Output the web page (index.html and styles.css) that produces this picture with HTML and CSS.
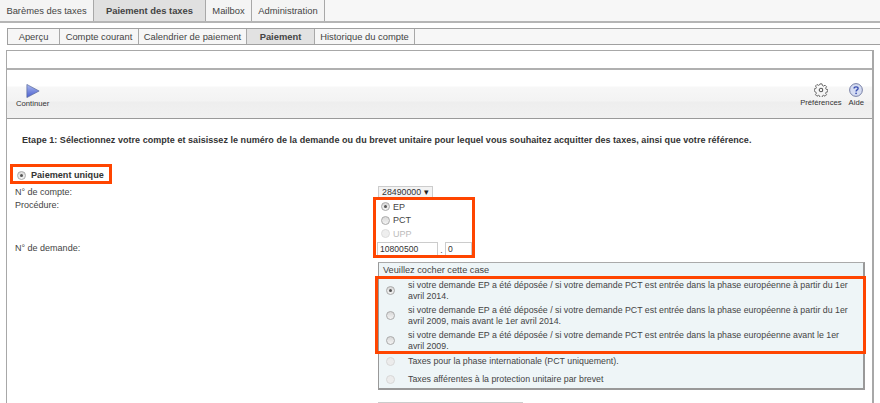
FILE: index.html
```html
<!DOCTYPE html>
<html lang="fr">
<head>
<meta charset="utf-8">
<title>Paiement</title>
<link rel="stylesheet" href="styles.css">
</head>
<body>
<nav class="tabs main-tabs">
  <a class="tab t1">Barèmes des taxes</a>
  <a class="tab t2 active">Paiement des taxes</a>
  <a class="tab t3">Mailbox</a>
  <a class="tab t4">Administration</a>
  <span class="tab-fill"></span>
</nav>
<nav class="tabs sub-tabs">
  <a class="tab s1">Aperçu</a>
  <a class="tab s2">Compte courant</a>
  <a class="tab s3">Calendrier de paiement</a>
  <a class="tab s4 active">Paiement</a>
  <a class="tab s5">Historique du compte</a>
  <span class="tab-fill"></span>
</nav>
<main class="panel">
  <div class="panel-top"></div>
  <div class="toolbar">
    <div class="tool tool-continue">
      <svg width="14" height="14" viewBox="0 0 16 16"><defs><linearGradient id="p" x1="0" y1="0" x2="0" y2="1"><stop offset="0" stop-color="#a9b8ee"/><stop offset="1" stop-color="#4a5fd0"/></linearGradient></defs><path d="M1 .5 15 8 1 15.500Z" fill="url(#p)" stroke="#5a6a9c" stroke-width=".8"/></svg>
      <span>Continuer</span>
    </div>
    <div class="tool-right">
      <div class="tool">
        <svg width="14" height="14" viewBox="0 0 16 16" fill="none" stroke="#555"><path d="M6.800 1h2.400l.4 1.900 1.300.6 1.700-1 1.700 1.700-1 1.700.6 1.300 1.900.4v2.400l-1.900.4-.6 1.300 1 1.700-1.700 1.700-1.700-1-1.300.6-.4 1.900H6.800l-.4-1.900-1.300-.6-1.700 1-1.700-1.700 1-1.700-.6-1.300L.2 9.200V6.800l1.900-.4.600-1.300-1-1.700 1.700-1.700 1.700 1 1.300-.6Z" stroke-width="1"/><circle cx="8" cy="8" r="2" stroke-width="1.200"/></svg>
        <span>Préférences</span>
      </div>
      <div class="tool">
        <svg width="14" height="14" viewBox="0 0 16 16"><circle cx="8" cy="8" r="7.300" fill="#d5dcf2" stroke="#68719a"/><path d="M5.800 6.200C5.800 3.800 10.400 3.800 10.400 6.200 10.400 7.900 8.100 7.800 8.100 9.600" fill="none" stroke="#3a4fb0" stroke-width="1.600"/><circle cx="8.100" cy="11.800" r="1" fill="#3a4fb0"/></svg>
        <span>Aide</span>
      </div>
    </div>
  </div>
  <p class="intro">Etape 1: Sélectionnez votre compte et saisissez le numéro de la demande ou du brevet unitaire pour lequel vous souhaitez acquitter des taxes, ainsi que votre référence.</p>
  <label class="single"><span class="radio on"></span>Paiement unique</label>
  <div class="form">
    <div class="form-label acct">N° de compte:</div>
    <div class="acct-field"><span class="select">28490000 <i>▾</i></span></div>
    <div class="form-label proc">Procédure:</div>
    <div class="proc-field">
      <div class="opt"><span class="radio on"></span>EP</div>
      <div class="opt"><span class="radio"></span>PCT</div>
      <div class="opt disabled"><span class="radio"></span>UPP</div>
    </div>
    <div class="form-label num">N° de demande:</div>
    <div class="num-field"><span class="input wide">10800500</span><span class="dot">.</span><span class="input narrow">0</span></div>
    <div class="case">
      <div class="case-title">Veuillez cocher cette case</div>
      <div class="case-row"><span class="radio on"></span><span>si votre demande EP a été déposée / si votre demande PCT est entrée dans la phase européenne à partir du 1er avril 2014.</span></div>
      <div class="case-row"><span class="radio"></span><span>si votre demande EP a été déposée / si votre demande PCT est entrée dans la phase européenne à partir du 1er avril 2009, mais avant le 1er avril 2014.</span></div>
      <div class="case-row"><span class="radio"></span><span>si votre demande EP a été déposée / si votre demande PCT est entrée dans la phase européenne avant le 1er avril 2009.</span></div>
      <div class="case-row single-line"><span class="radio dim"></span><span>Taxes pour la phase internationale (PCT uniquement).</span></div>
      <div class="case-row single-line"><span class="radio dim"></span><span>Taxes afférentes à la protection unitaire par brevet</span></div>
    </div>
    <div class="next-line"></div>
  </div>
</main>
<div class="mark m1"></div>
<div class="mark m2"></div>
<div class="mark m3"></div>
</body>
</html>
```
FILE: styles.css
```css
* { box-sizing: border-box; }
html, body { margin: 0; height: 403px; overflow: hidden; }
body { position: relative; background: #fff; font-family: "Liberation Sans", Arial, sans-serif; font-size: 9px; color: #444; }
.tabs { display: flex; }
.tab { display: flex; align-items: center; justify-content: center; background: #f4f4f4; border-right: 1px solid #a8a8a8; white-space: nowrap; }
.tab-fill { flex: 1; background: #f7f7f7; }
.main-tabs { height: 23px; border-bottom: 2px solid #b5b5b5; font-size: 9.4px; }
.main-tabs .tab { padding-bottom: 1px; }
.tab.active { background: #e0e0e0; font-weight: bold; }
.t1 { width: 94px; }
.t2 { width: 112px; }
.t3 { width: 46px; }
.t4 { width: 73px; }
.sub-tabs { height: 17px; margin: 5px 0 0 7px; border: 1px solid #a0a0a0; border-right: 0; font-size: 9.4px; }
.sub-tabs .tab { background: #f6f6f6; }
.sub-tabs .tab.active { background: #e2e2e2; }
.s1 { width: 52px; }
.s2 { width: 79px; }
.s3 { width: 108px; }
.s4 { width: 68px; }
.s5 { width: 100px; }
.panel { margin: 5px 6px 0 6px; height: 360px; border: 1px solid #a8a8a8; border-width: 1px 2px 0 1px; }
.panel-top { height: 19px; border-bottom: 2px solid #b0b0b0; }
.toolbar { height: 49px; display: flex; justify-content: space-between; border-bottom: 1px solid #9a9a9a; background: linear-gradient(#fff 0, #fff 16px, #f7f7f7 17px, #f3f3f3 31px, #eeeeee 32px, #f1f1f1 100%); padding: 13px 8px 0 9px; color: #333; font-size: 7.7px; }
.tool { display: flex; flex-direction: column; align-items: center; gap: 1px; }
.tool svg { display: block; }
.tool-continue { margin-top: 1px; }
.tool-right { display: flex; gap: 7px; }
.intro { margin: 15px 0 0 15px; font-weight: bold; font-size: 9px; line-height: 12px; color: #333; letter-spacing: .04px; white-space: nowrap; }
.radio { display: inline-block; flex: none; width: 9px; height: 9px; border-radius: 50%; border: 1px solid #aaa; background: linear-gradient(#d8d8d8, #f4f4f4); position: relative; }
.radio.on::after { content: ""; position: absolute; left: 2px; top: 2px; width: 3px; height: 3px; border-radius: 50%; background: #555; }
.radio.dim { border-color: #d8d8d8; background: #ececec; }
.single { display: flex; align-items: center; gap: 5px; margin: 21px 0 0 10px; font-weight: bold; font-size: 9.1px; color: #333; height: 16px; }
.form { display: grid; grid-template-columns: 371px 1fr; margin-top: 3px; color: #444; }
.form-label { padding-left: 8px; line-height: 12px; }
.acct-field { height: 13px; }
.select { display: flex; align-items: center; height: 12px; width: 55px; padding-left: 3px; border: 1px solid #ccc; color: #333; font-size: 8.8px; background: #f3f3f3; }
.select i { font-style: normal; font-size: 9px; margin-left: 3px; color: #222; }
.proc-field { padding: 1px 0 0 3px; height: 43px; font-size: 9px; }
.opt { display: flex; align-items: center; gap: 3px; height: 13.5px; color: #444; }
.opt.disabled { color: #bbb; }
.opt.disabled .radio { border-color: #ddd; background: #eee; }
.num-field { display: flex; align-items: center; height: 15px; margin-left: -1px; font-size: 8.6px; }
.input { height: 15px; line-height: 13px; border: 1px solid #ccc; padding-left: 2px; color: #333; }
.wide { width: 61px; }
.narrow { width: 27px; }
.dot { width: 7px; text-align: center; }
.case { grid-column: 2; width: 487px; margin-top: 5px; height: 128px; background: #eef5f7; border: 1px solid #999; border-right-width: 2px; border-bottom-width: 2px; border-top-color: #aaa; padding-top: 1px; font-size: 8.8px; }
.case-title { height: 14px; padding-left: 4px; line-height: 13px; font-size: 9.2px; color: #444; }
.case-row { display: flex; align-items: center; height: 25px; padding-left: 7px; gap: 13px; line-height: 11px; }
.case-row > span:last-child { width: 448px; }
.case-row.single-line { height: 18px; padding-bottom: 1px; }
.next-line { grid-column: 2; width: 145px; margin-top: 12px; border-top: 1px solid #ccc; }
.mark { position: absolute; border: 3px solid #ff4500; pointer-events: none; }
.m1 { left: 10px; top: 164px; width: 102px; height: 20px; }
.m2 { left: 373px; top: 197px; width: 102px; height: 61px; }
.m3 { left: 375px; top: 276px; width: 491px; height: 78px; }
```
